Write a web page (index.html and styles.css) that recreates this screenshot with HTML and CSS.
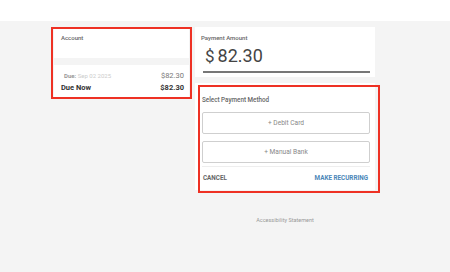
FILE: index.html
```
<!DOCTYPE html>
<html>
<head>
<meta charset="utf-8">
<link rel="stylesheet" href="styles.css">
</head>
<body>
<div class="header"></div>
<div class="main">
  <div class="left annotated">
    <div class="acct-card">
      <div class="card-title">Account</div>
      <div class="faint">&nbsp;</div>
    </div>
    <div class="due-card">
      <div class="row">
        <span class="due-label">Due: <span class="due-date">Sep 02 2025</span></span>
        <span class="due-amt">$82.30</span>
      </div>
      <div class="row now">
        <span>Due Now</span>
        <span>$82.30</span>
      </div>
    </div>
  </div>
  <div class="right">
    <div class="amount-card">
      <div class="card-title">Payment Amount</div>
      <div class="amount"><span class="cur">$</span><span class="val">82.30</span></div>
    </div>
    <div class="method-card annotated2">
      <div class="card-title method-title">Select Payment Method</div>
      <div class="btn">+ Debit Card</div>
      <div class="btn">+ Manual Bank</div>
      <div class="actions">
        <span class="cancel">CANCEL</span>
        <span class="recurring">MAKE RECURRING</span>
      </div>
    </div>
    <div class="footer-link">Accessibility Statement</div>
  </div>
</div>
</body>
</html>
```
FILE: styles.css
```
* { box-sizing: border-box; }
html, body { margin: 0; padding: 0; }
body {
  font-family: Roboto, "Liberation Sans", sans-serif;
  background: #fff;
  width: 450px;
  height: 272px;
  overflow: hidden;
}
.header { height: 21px; background: #fff; }
.main {
  background: #f4f4f4;
  height: 251px;
  padding: 6px 0 0 54px;
  display: flex;
  align-items: flex-start;
  gap: 6px;
}
.left {
  width: 135px;
  display: flex;
  flex-direction: column;
  gap: 7px;
  position: relative;
}
.annotated::after {
  content: "";
  position: absolute;
  left: -3px; top: 0; right: -3px; bottom: -1px;
  border: 2px solid #ee3124;
}
.acct-card {
  background: #fff;
  height: 31px;
  padding: 7px 7px 0 7px;
}
.card-title {
  font-size: 6px;
  line-height: 7px;
  font-weight: 500;
  color: #666;
}
.faint { font-size: 6px; line-height: 7px; color: #f2f2f2; margin-top: 4px; }
.due-card {
  background: #fff;
  padding: 6px 5px 6px 7px;
}
.row {
  display: flex;
  justify-content: space-between;
  align-items: center;
  height: 9px;
}
.row.now { margin-top: 3px; font-size: 7.5px; font-weight: 700; color: #333; }
.due-label { font-size: 6px; font-weight: 700; color: #999; padding-left: 3px; }
.due-date { font-weight: 400; color: #ccc; }
.due-amt { font-size: 7.5px; color: #777; }
.right { width: 180px; display: flex; flex-direction: column; }
.amount-card {
  background: #fff;
  height: 50px;
  padding: 8px 5px 0 6px;
}
.amount-card .card-title { line-height: 6px; color: #666; }
.amount {
  margin: 6px 0 0 2px;
  border-bottom: 2px solid #777;
  padding: 0 0 6px 2px;
  font-size: 18px;
  line-height: 18px;
  color: #444;
  height: 26px;
}
.cur { margin-right: 3px; font-size: 17px; }
.method-card {
  background: #fff;
  margin-top: 6px;
  padding: 14px 5px 0 7px;
  height: 107px;
  position: relative;
}
.annotated2::after {
  content: "";
  position: absolute;
  left: 3px; top: 2px; right: -5px; bottom: -3px;
  border: 2px solid #ee3124;
}
.method-title { line-height: 6px; color: #666; font-size: 6.3px; }
.btn {
  margin-top: 9px;
  height: 22px;
  border: 1px solid #cfcfcf;
  border-radius: 2px;
  display: flex;
  align-items: center;
  justify-content: center;
  font-size: 6.6px;
  color: #888;
}
.btn + .btn { margin-top: 7px; }
.actions {
  margin-top: 3px;
  border-top: 1px solid #eee;
  padding: 8px 2px 0 1px;
  display: flex;
  justify-content: space-between;
  font-size: 6.3px;
  line-height: 7px;
  font-weight: 700;
}
.cancel { color: #666; }
.recurring { color: #4a86b8; }
.footer-link {
  margin-top: 27px;
  text-align: center;
  font-size: 5.5px;
  color: #999;
}
```
